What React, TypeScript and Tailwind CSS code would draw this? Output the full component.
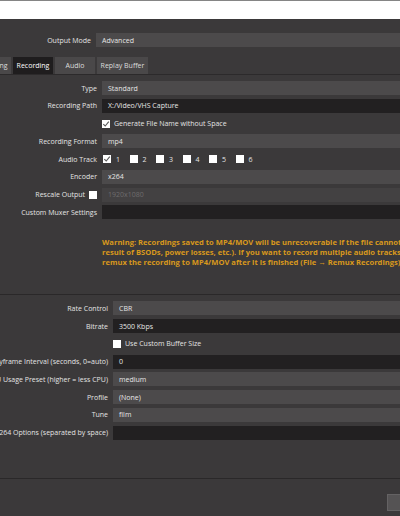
import React from "react";

const Check = ({ checked = false }: { checked?: boolean }) => (
  <div className="w-[8px] h-[8px] bg-white shrink-0 flex items-center justify-center">
    {checked && (
      <svg width="8" height="8" viewBox="0 0 8 8">
        <path d="M1.3 4.1 L3.2 6 L6.8 1.6" fill="none" stroke="#5a5a5a" strokeWidth="1.1" />
      </svg>
    )}
  </div>
);

type Kind = "combo" | "edit" | "disabled";

const Field = ({ kind, text }: { kind: Kind; text?: string }) => {
  const cls =
    kind === "combo"
      ? "bg-[#4c4a4b] text-[#e6e6e6]"
      : kind === "edit"
      ? "bg-[#222021] text-[#e6e6e6]"
      : "bg-[#434142] text-[#6e6c6d]";
  return (
    <div className={`flex-1 h-full flex items-center pl-[6px] whitespace-nowrap ${cls}`}>
      {text}
    </div>
  );
};

const Row = ({
  lw,
  label,
  children,
}: {
  lw: string;
  label?: React.ReactNode;
  children: React.ReactNode;
}) => (
  <div className="flex items-center h-[14px] gap-[5px]">
    <div className={`${lw} h-full flex items-center justify-end shrink-0`}>
      <div className="flex items-center whitespace-nowrap shrink-0">{label}</div>
    </div>
    {children}
  </div>
);

const Tab = ({ w, text, active = false }: { w: string; text: string; active?: boolean }) => (
  <div
    className={`${w} h-full flex items-center justify-center shrink-0 whitespace-nowrap ${
      active ? "bg-[#1f1d1e] text-white" : "bg-[#4a4849] text-[#dcdcdc]"
    }`}
  >
    {text}
  </div>
);

export default function App() {
  const TW = "w-[97px]";
  const BW = "w-[108px]";
  return (
    <div className="w-[400px] h-[516px] overflow-hidden bg-[#3b393a] font-['Open_Sans','Liberation_Sans',sans-serif] text-[7px] text-[#e4e4e4] leading-none">
      <div className="h-[1px] bg-[#858585]" />
      <div className="h-[18px] bg-white" />
      <div className="w-[460px] flex flex-col">
        <div className="mt-[14px]">
          <Row lw="w-[91px]" label="Output Mode">
            <Field kind="combo" text="Advanced" />
          </Row>
        </div>

        <div className="mt-[10px] h-[17px] flex gap-[2px] ml-[-29px]">
          <Tab w="w-[40px]" text="Streaming" />
          <Tab w="w-[40px]" text="Recording" active />
          <Tab w="w-[40px]" text="Audio" />
          <Tab w="w-[51px]" text="Replay Buffer" />
        </div>
        <div className="h-[1px] bg-[#2c2a2b]" />

        <div className="mt-[6px] flex flex-col gap-[3.75px]">
          <Row lw={TW} label="Type">
            <Field kind="combo" text="Standard" />
          </Row>
          <Row lw={TW} label="Recording Path">
            <Field kind="edit" text="X:/Video/VHS Capture" />
          </Row>
          <Row lw={TW}>
            <div className="flex items-center gap-[4px] whitespace-nowrap">
              <Check checked />
              <span>Generate File Name without Space</span>
            </div>
          </Row>
          <Row lw={TW} label="Recording Format">
            <Field kind="combo" text="mp4" />
          </Row>
          <Row lw={TW} label="Audio Track">
            <div className="flex items-center gap-[9.5px] ml-[1px]">
              {["1", "2", "3", "4", "5", "6"].map((n, i) => (
                <div key={n} className="flex items-center gap-[5px]">
                  <Check checked={i === 0} />
                  <span className="w-[4px]">{n}</span>
                </div>
              ))}
            </div>
          </Row>
          <Row lw={TW} label="Encoder">
            <Field kind="combo" text="x264" />
          </Row>
          <Row
            lw={TW}
            label={
              <>
                <span>Rescale Output</span>
                <span className="ml-[4px]">
                  <Check />
                </span>
              </>
            }
          >
            <Field kind="disabled" text="1920x1080" />
          </Row>
          <Row lw={TW} label="Custom Muxer Settings">
            <Field kind="edit" />
          </Row>
        </div>

        <div className="mt-[18px] ml-[102px] text-[#d8981c] font-bold text-[7.6px] leading-[10px] whitespace-nowrap">
          Warning: Recordings saved to MP4/MOV will be unrecoverable if the file cannot be finalized (e.g. as a
          <br />
          result of BSODs, power losses, etc.). If you want to record multiple audio tracks consider using MKV and
          <br />
          remux the recording to MP4/MOV after it is finished (File → Remux Recordings)
        </div>

        <div className="mt-[27px] h-[1px] bg-[#2a2829]" />

        <div className="mt-[6px] flex flex-col gap-[3.75px]">
          <Row lw={BW} label="Rate Control">
            <Field kind="combo" text="CBR" />
          </Row>
          <Row lw={BW} label="Bitrate">
            <Field kind="edit" text="3500 Kbps" />
          </Row>
          <Row lw={BW}>
            <div className="flex items-center gap-[4px] whitespace-nowrap">
              <Check />
              <span>Use Custom Buffer Size</span>
            </div>
          </Row>
          <Row lw={BW} label="Keyframe Interval (seconds, 0=auto)">
            <Field kind="edit" text="0" />
          </Row>
          <Row lw={BW} label="CPU Usage Preset (higher = less CPU)">
            <Field kind="combo" text="medium" />
          </Row>
          <Row lw={BW} label="Profile">
            <Field kind="combo" text="(None)" />
          </Row>
          <Row lw={BW} label="Tune">
            <Field kind="combo" text="film" />
          </Row>
          <Row lw={BW} label="x264 Options (separated by space)">
            <Field kind="edit" />
          </Row>
        </div>

        <div className="mt-[38px] h-[1px] bg-[#2a2829]" />

        <div className="mt-[15px] ml-[387px] w-[40px] h-[17px] bg-[#555354] border border-[#646263]" />
      </div>
    </div>
  );
}
